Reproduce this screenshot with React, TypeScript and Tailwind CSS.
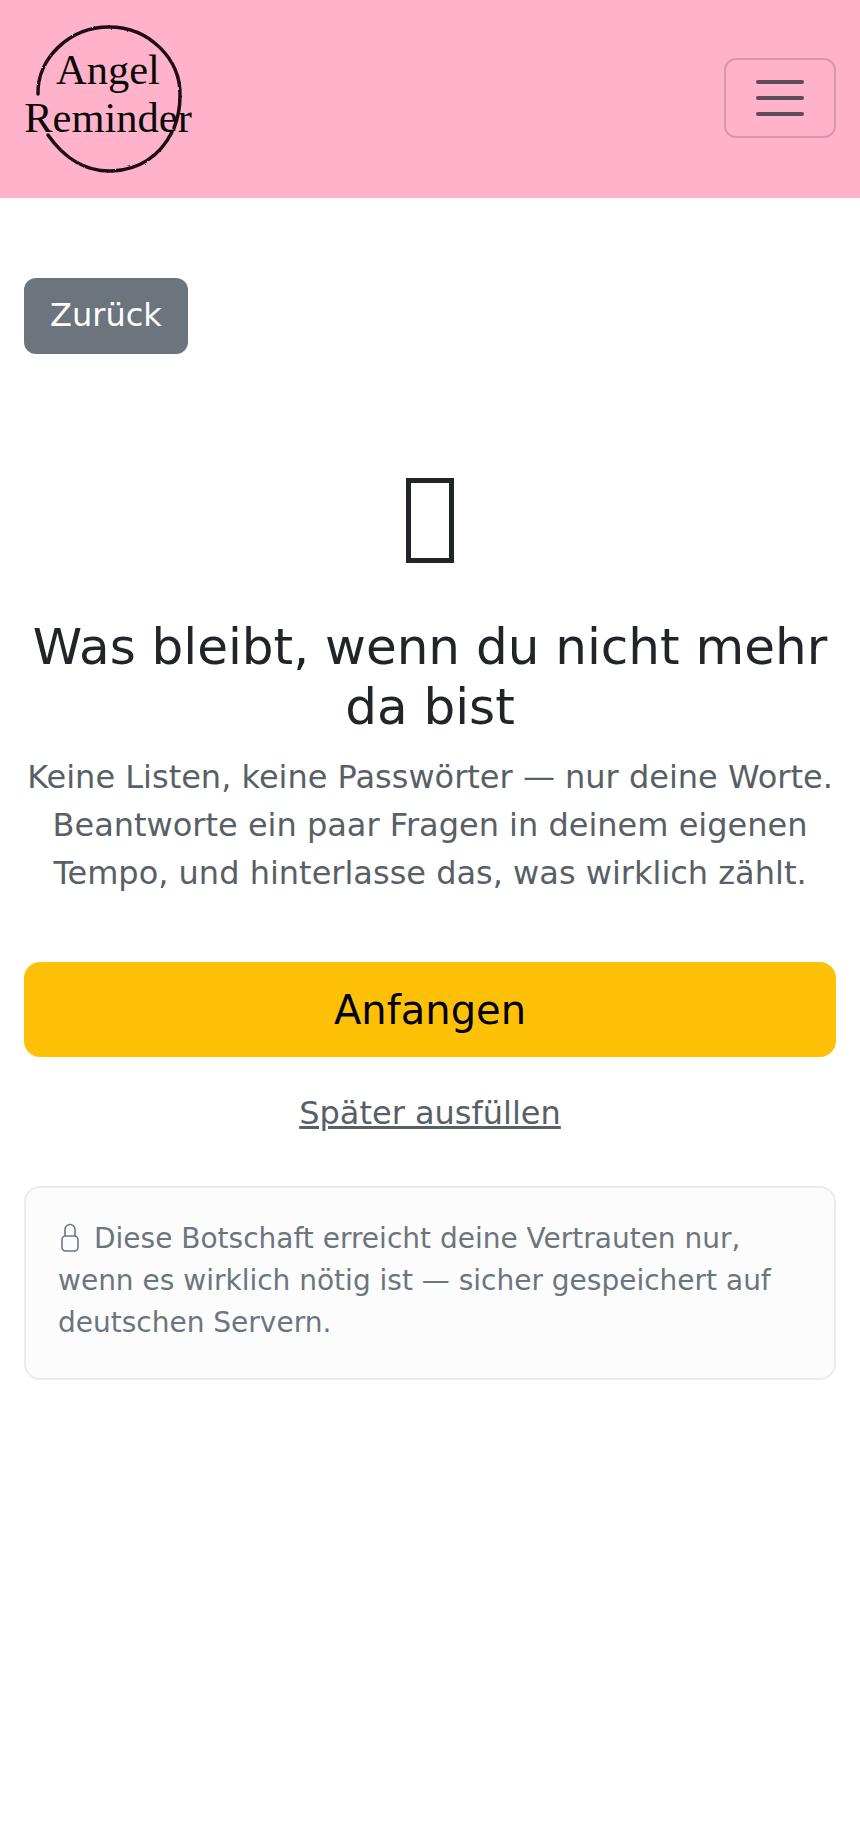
import React from 'react'

function Logo() {
  return (
    <div className="relative -left-[1px] w-[170px] h-[150px] flex flex-col items-center pt-[22px] font-['Liberation_Serif',serif] text-[42.5px] leading-[48px] text-[#0a0a0a]">
      <svg className="absolute left-[1px] top-0" width="170" height="150" viewBox="0 0 170 150" fill="none" stroke="#1a1016" strokeLinecap="round">
        <defs>
          <filter id="rough" x="-5%" y="-5%" width="110%" height="110%">
            <feTurbulence type="fractalNoise" baseFrequency="0.3" numOctaves="2" seed="4" />
            <feDisplacementMap in="SourceGraphic" scale="2" />
          </filter>
        </defs>
        <g filter="url(#rough)">
          <path d="M14 70 C13 35 45 3 85 3 C125 3 157 35 156 72 C156 84 154 94 150 104" strokeWidth="3.5" />
          <path d="M24 111 C40 134 62 148 88 147 C115 146 136 132 148 108" strokeWidth="3.5" />
        </g>
      </svg>
      <span className="relative">Angel</span>
      <span className="relative">Reminder</span>
    </div>
  )
}

export default function App() {
  return (
    <div className="min-h-[1840px] bg-white font-['DejaVu_Sans',sans-serif] text-[#212529]">
      <nav className="h-[198px] bg-[#ffb2c9] px-[24px] flex items-center justify-between">
        <Logo />
        <button className="w-[112px] h-[80px] -mt-[2px] border-2 border-black/15 rounded-[12px] flex items-center justify-center">
          <svg width="48" height="36" viewBox="0 0 48 36" stroke="#5a4d57" strokeWidth="4" strokeLinecap="round">
            <path d="M2 2H46M2 18H46M2 34H46" />
          </svg>
        </button>
      </nav>

      <main className="px-[24px] pt-[80px]">
        <button className="block w-[164px] h-[76px] pb-[2px] rounded-[12px] bg-[#6c757d] text-white text-[32px] leading-[48px]">
          Zurück
        </button>

        <div className="mt-[96px] text-center">
          {/* missing glyph box, the emoji did not render in the original */}
          <div className="h-[144px] flex items-start justify-center pt-[28px]">
            <div className="w-[48px] h-[85px] border-[5px] border-[#212529]" />
          </div>
          <h1 className="mt-[23px] text-[50px] leading-[60px] font-normal">Was bleibt, wenn du nicht mehr da bist</h1>
          <p className="mt-[16px] text-[32px] leading-[48px] text-[#595f66]">
            Keine Listen, keine Passwörter — nur deine Worte. Beantworte ein paar Fragen in deinem eigenen Tempo, und hinterlasse das, was wirklich zählt.
          </p>
        </div>

        <button className="mt-[65px] block w-full h-[95px] rounded-[16px] bg-[#ffc107] text-black text-[40px] leading-[60px]">
          Anfangen
        </button>

        <div className="mt-[32px] text-center">
          <a className="text-[32px] leading-[48px] text-[#595f66] underline">Später ausfüllen</a>
        </div>

        <div className="mt-[49px] h-[194px] border-2 border-[#e9ecef] rounded-[16px] bg-[#fcfcfd] px-[32px] pt-[30px] text-[28px] leading-[42px] text-[#6c757d]">
          <svg className="inline-block align-[-4px] mr-[12px] w-[24px] h-[30px]" viewBox="0 0 24 30" fill="none" stroke="#6c757d" strokeWidth="1.6">
            <path d="M7 14V7.5a5 5 0 0 1 10 0V14" />
            <rect x="4" y="14" width="16" height="15" rx="3.5" />
          </svg>
          Diese Botschaft erreicht deine Vertrauten nur, wenn es wirklich nötig ist — sicher gespeichert auf deutschen Servern.
        </div>
      </main>
    </div>
  )
}
